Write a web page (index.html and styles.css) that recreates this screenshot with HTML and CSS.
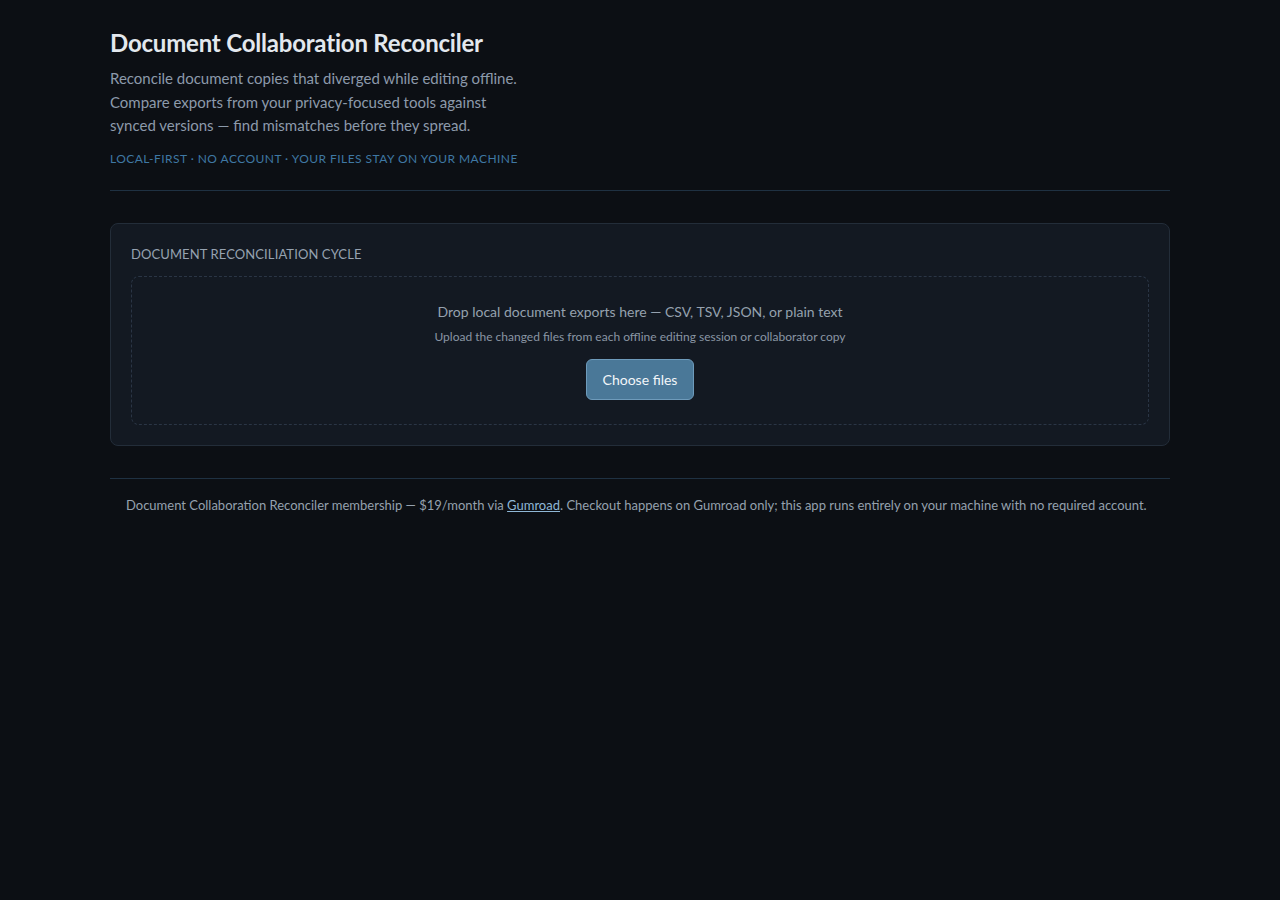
FILE: index.html
```html
<!DOCTYPE html>
<html lang="en">
<head>
    <meta charset="UTF-8">
    <meta name="viewport" content="width=device-width, initial-scale=1.0">
    <title>Document Collaboration Reconciler</title>
    <link rel="stylesheet" href="styles.css">
</head>
<body>
    <div class="page">
        <header class="intro">
            <h1>Document Collaboration Reconciler</h1>
            <p class="lead">Reconcile document copies that diverged while editing offline. Compare exports from your privacy-focused tools against synced versions — find mismatches before they spread.</p>
            <p class="tagline">Local-first · No account · Your files stay on your machine</p>
        </header>

        <section class="card">
            <h2 class="card-title">Document Reconciliation Cycle</h2>
            <div class="dropzone">
                <p class="drop-main">Drop local document exports here — CSV, TSV, JSON, or plain text</p>
                <p class="drop-sub">Upload the changed files from each offline editing session or collaborator copy</p>
                <button class="choose-btn" type="button">Choose files</button>
            </div>
        </section>

        <footer class="footer">
            Document Collaboration Reconciler membership — $19/month via <a href="#">Gumroad</a>. Checkout happens on Gumroad only; this app runs entirely on your machine with no required account.
        </footer>
    </div>
</body>
</html>
```

FILE: styles.css
```css
body {
    margin: 0;
    background-color: #0c0f14;
    color: #c9d1d9;
    font-family: Lato, "Noto Sans", sans-serif;
}

.page {
    max-width: 1060px;
    margin: 0 auto;
    padding: 28px 0 40px;
}

.intro {
    padding-bottom: 24px;
    border-bottom: 1px solid #1f3142;
}

h1 {
    margin: 0 0 10px;
    font-size: 24px;
    font-weight: 700;
    color: #e3e8ee;
    letter-spacing: -0.2px;
}

.lead {
    max-width: 420px;
    margin: 0 0 13px;
    font-size: 15px;
    line-height: 23.5px;
    color: #8c9aab;
}

.tagline {
    margin: 0;
    font-size: 12px;
    letter-spacing: 0.45px;
    text-transform: uppercase;
    color: #3f78a3;
}

.card {
    margin-top: 32px;
    padding: 22px 20px 20px;
    background-color: #131922;
    border: 1px solid #232d39;
    border-radius: 8px;
}

.card-title {
    margin: 0 0 14px;
    font-size: 13px;
    font-weight: 400;
    letter-spacing: 0.1px;
    text-transform: uppercase;
    color: #96a2b0;
}

.dropzone {
    padding: 26px 20px 24px;
    border: 1px dashed #2a3545;
    border-radius: 8px;
    text-align: center;
}

.drop-main {
    margin: 0 0 9px;
    font-size: 14px;
    color: #95a1ae;
}

.drop-sub {
    margin: 0 0 15px;
    font-size: 12px;
    color: #8a96a4;
}

.choose-btn {
    height: 41px;
    padding: 0 16px;
    border: 1px solid #6e9bbb;
    border-radius: 6px;
    background-color: #4a7898;
    color: #f2f6f9;
    font-family: inherit;
    font-size: 14px;
    cursor: pointer;
}

.footer {
    margin-top: 32px;
    padding: 18px 16px;
    border-top: 1px solid #1f3142;
    font-size: 13px;
    color: #95a1ae;
}

.footer a {
    color: #8fb7d6;
}
```
